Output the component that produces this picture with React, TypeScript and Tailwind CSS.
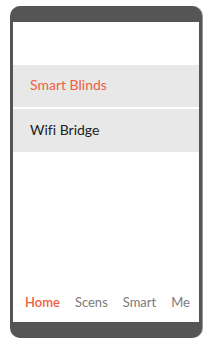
export default function App() {
  const tabs = ["Home", "Scens", "Smart", "Me"]

  return (
    <div className="w-[224px] h-[348px] bg-white pt-[6px] pl-[10px] [font-variant-ligatures:none]" style={{ fontFamily: "Lato, 'Open Sans', sans-serif" }}>
      <div className="w-[192px] h-[332px] rounded-[10px] bg-[#555555] border-x-[3px] border-y-[16px] border-[#555555] shadow-[1px_0_0_#9a9a9a]">
        <div className="flex flex-col h-full bg-white">
          <div className="h-[43px]" />
          <div className="h-[42px] flex items-center pl-[17px] pb-[4px] bg-[#e8e8e8] text-[14px] text-[#f0603f]">
            Smart Blinds
          </div>
          <div className="h-[2px]" />
          <div className="h-[43px] flex items-center pl-[17px] pb-[3px] bg-[#e8e8e8] text-[14px] text-[#222222]">
            Wifi Bridge
          </div>
          <div className="flex-1" />
          <nav className="flex items-center gap-[15px] pl-[12px] h-[36px] mb-[1px] text-[13px]">
            {tabs.map((t, i) => (
              <span key={t} className={i === 0 ? "text-[#f0603f] font-semibold" : "text-[#7a7a7a]"}>
                {t}
              </span>
            ))}
          </nav>
        </div>
      </div>
    </div>
  )
}
